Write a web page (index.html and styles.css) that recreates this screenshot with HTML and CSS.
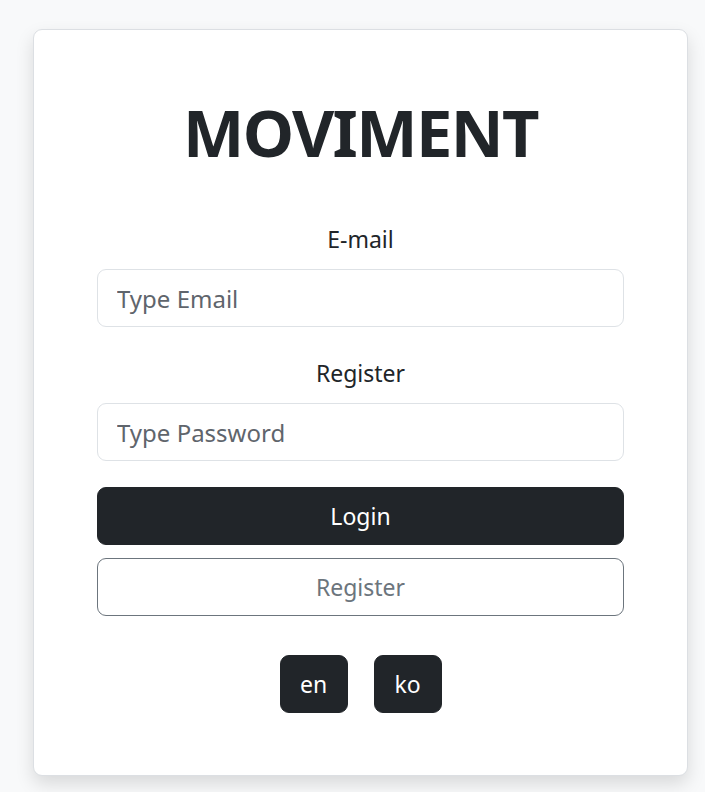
FILE: index.html
```html
<!DOCTYPE html>
<html lang="en">
<head>
<meta charset="utf-8">
<title>MOVIMENT</title>
<link rel="stylesheet" href="styles.css">
</head>
<body>
<div class="page">
  <div class="card">
    <h1 class="title">MOVIMENT</h1>
    <form class="form">
      <label class="label" for="email">E-mail</label>
      <input class="input" id="email" type="email" placeholder="Type Email">
      <label class="label label-second" for="password">Register</label>
      <input class="input" id="password" type="password" placeholder="Type Password">
      <button type="button" class="btn btn-dark btn-login">Login</button>
      <button type="button" class="btn btn-outline">Register</button>
    </form>
    <div class="langs">
      <button type="button" class="lang">en</button>
      <button type="button" class="lang">ko</button>
    </div>
  </div>
</div>
</body>
</html>
```

FILE: styles.css
```css
* { box-sizing: border-box; }
html, body { margin: 0; padding: 0; }
body {
  background: #f8f9fa;
  font-family: "Noto Sans", "Open Sans", sans-serif;
  color: #212529;
}
.page {
  padding: 29px 17px 16px 33px;
}
.card {
  width: 655px;
  height: 747px;
  background: #fff;
  border: 1px solid #dcdfe3;
  border-radius: 9px;
  box-shadow: 0 8px 18px rgba(0, 0, 0, 0.13);
  padding: 0 63px;
  display: flex;
  flex-direction: column;
}
.title {
  margin: 62px 0 0;
  font-size: 65px;
  font-weight: 700;
  line-height: 80px;
  text-align: center;
  color: #212529;
  letter-spacing: -1.6px;
}
.form {
  display: flex;
  flex-direction: column;
  margin-top: 50px;
}
.label {
  font-size: 23px;
  line-height: 34px;
  text-align: center;
  color: #212529;
  margin-bottom: 13px;
}
.label-second { margin-top: 29px; }
.input {
  height: 58px;
  width: 100%;
  border: 1px solid #dee2e6;
  border-radius: 9px;
  padding: 0 19px;
  font-family: inherit;
  font-size: 24px;
  color: #212529;
  background: #fff;
  outline: none;
}
.input::placeholder { color: #5f656c; opacity: 1; }
.btn {
  height: 58px;
  width: 100%;
  border-radius: 9px;
  font-family: inherit;
  font-size: 23px;
  cursor: pointer;
}
.btn-dark {
  background: #212529;
  border: 1px solid #212529;
  color: #fff;
}
.btn-login { margin-top: 26px; }
.btn-outline {
  margin-top: 13px;
  background: #fff;
  border: 1px solid #6c757d;
  color: #6c757d;
}
.langs {
  display: flex;
  justify-content: center;
  gap: 26px;
  margin-top: 39px;
}
.lang {
  width: 68px;
  height: 58px;
  background: #212529;
  border: 1px solid #212529;
  border-radius: 9px;
  color: #fff;
  font-family: inherit;
  font-size: 23px;
  cursor: pointer;
}
```
